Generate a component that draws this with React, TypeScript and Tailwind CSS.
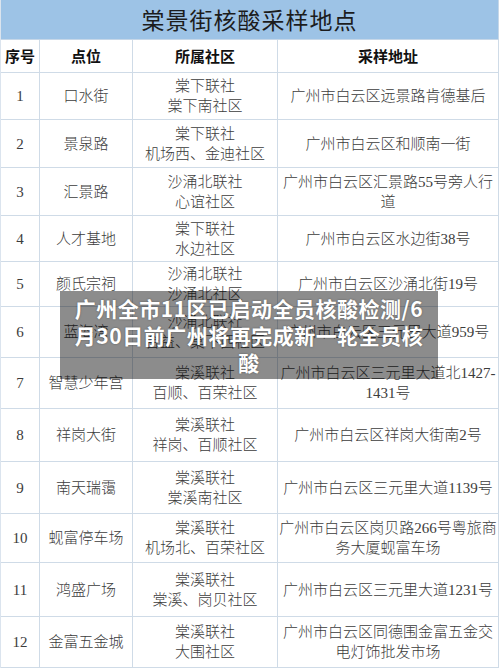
const rows = [
  { no: "1", spot: "口水街", comm: ["棠下联社", "棠下南社区"], addr: "广州市白云区远景路肯德基后", h: "h-[47px]" },
  { no: "2", spot: "景泉路", comm: ["棠下联社", "机场西、金迪社区"], addr: "广州市白云区和顺南一街", h: "h-[48px]" },
  { no: "3", spot: "汇景路", comm: ["沙涌北联社", "心谊社区"], addr: "广州市白云区汇景路55号旁人行道", h: "h-[48px]" },
  { no: "4", spot: "人才基地", comm: ["棠下联社", "水边社区"], addr: "广州市白云区水边街38号", h: "h-[46px]" },
  { no: "5", spot: "颜氏宗祠", comm: ["沙涌北联社", "沙涌北社区"], addr: "广州市白云区沙涌北街19号", h: "h-[45px]" },
  { no: "6", spot: "蓝海湾", comm: ["沙涌北联社", "台益、棠下西社区"], addr: "广州市白云区三元里大道959号", h: "h-[51px]" },
  { no: "7", spot: "智慧少年宫", comm: ["棠溪联社", "百顺、百荣社区"], addr: "广州市白云区三元里大道北1427-\u200B1431号", h: "h-[51px]" },
  { no: "8", spot: "祥岗大街", comm: ["棠溪联社", "祥岗、百顺社区"], addr: "广州市白云区祥岗大街南2号", h: "h-[53px]" },
  { no: "9", spot: "南天瑞霭", comm: ["棠溪联社", "棠溪南社区"], addr: "广州市白云区三元里大道1139号", h: "h-[52px]" },
  { no: "10", spot: "蚬富停车场", comm: ["棠溪联社", "机场北、百荣社区"], addr: "广州市白云区岗贝路266号粤旅商务大厦蚬富车场", h: "h-[49px]" },
  { no: "11", spot: "鸿盛广场", comm: ["棠溪联社", "棠溪、岗贝社区"], addr: "广州市白云区三元里大道1231号", h: "h-[54px]" },
  { no: "12", spot: "金富五金城", comm: ["棠溪联社", "大围社区"], addr: "广州市白云区同德围金富五金交电灯饰批发市场", h: "h-[51px]" },
];

const cell = "flex items-center justify-center text-center border-r border-b border-[#cfdbe7]";

export default function App() {
  return (
    <div className="relative w-[500px] h-[671px] overflow-hidden bg-white">
      <div className="w-[499px] border-l border-[#dbe4ee]">
        <div className="h-[40px] bg-[#9dc3e6] border-b border-[#c6d7e8] border-r flex items-center justify-center text-[23px] text-[#1c1c1c] tracking-[1px] font-['Noto_Sans_CJK_SC',sans-serif]">
          棠景街核酸采样地点
        </div>
        <div className="grid grid-cols-[39px_93px_145px_221px] font-['Noto_Sans_CJK_SC',sans-serif] font-bold text-[15px] text-[#111]">
          <div className={`${cell} h-[33px]`}>序号</div>
          <div className={`${cell} h-[33px]`}>点位</div>
          <div className={`${cell} h-[33px]`}>所属社区</div>
          <div className={`${cell} h-[33px]`}>采样地址</div>
        </div>
        <div className="grid grid-cols-[39px_93px_145px_221px] font-['Liberation_Serif','Noto_Sans_CJK_SC',serif] font-light text-[15px] leading-[20px] text-[#3c3c3c]">
          {rows.map((r) => (
            <>
              <div key={r.no + "a"} className={`${cell} ${r.h}`}>{r.no}</div>
              <div key={r.no + "b"} className={`${cell} ${r.h}`}>{r.spot}</div>
              <div key={r.no + "c"} className={`${cell} ${r.h} flex-col`}>
                <span>{r.comm[0]}</span>
                <span>{r.comm[1]}</span>
              </div>
              <div key={r.no + "d"} className={`${cell} ${r.h} px-0`}>{r.addr}</div>
            </>
          ))}
        </div>
      </div>
      <div className="absolute left-[60px] top-[291px] w-[378px] bg-black/45 px-[14px] pt-1 pb-[3px] text-center text-white font-bold text-[21px] leading-[27px] tracking-[0.5px] font-['Noto_Sans_CJK_SC',sans-serif] [text-shadow:0_0_2px_rgba(0,0,0,0.4)]">
        广州全市11区已启动全员核酸检测/6月30日前广州将再完成新一轮全员核酸
      </div>
    </div>
  );
}
